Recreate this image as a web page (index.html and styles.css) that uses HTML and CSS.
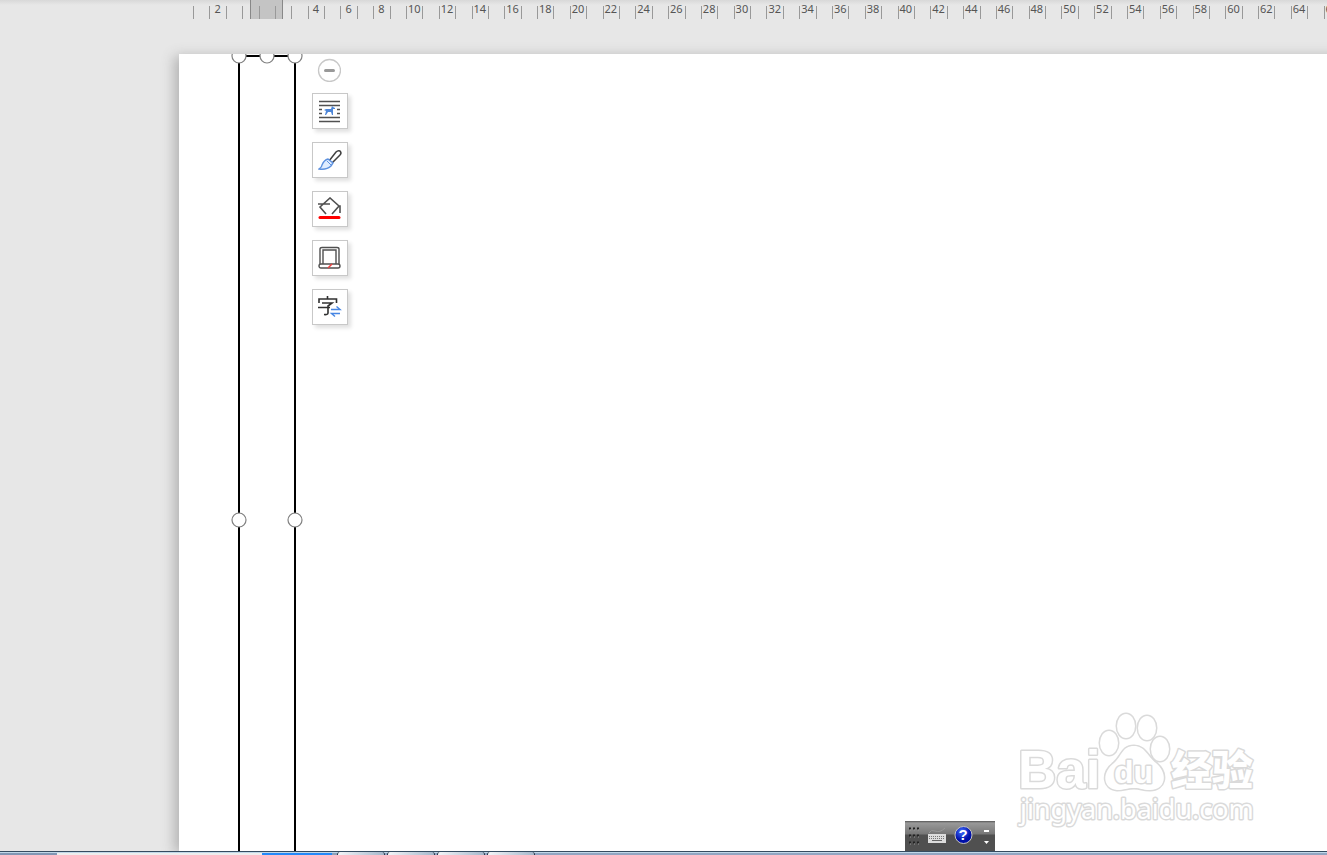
FILE: index.html
```html
<!DOCTYPE html>
<html lang="zh-CN">
<head>
<meta charset="utf-8">
<title>文档</title>
<link rel="stylesheet" href="styles.css">
</head>
<body>
<div class="app">
  <header class="ruler"><div class="margin-range"></div><div class="scale" id="scale"></div></header>
  <main class="workspace">
    <section class="paper">
      <svg class="shape" width="72" height="797" viewBox="0 0 72 797" aria-label="文本框">
        <path d="M8 797V2H64V797" fill="none" stroke="#000" stroke-width="2"/>
        <g fill="#fff" stroke="#808080" stroke-width="1.2">
          <circle cx="8" cy="2" r="7"/><circle cx="36" cy="2" r="7"/><circle cx="64" cy="2" r="7"/>
          <circle cx="8" cy="466" r="7"/><circle cx="64" cy="466" r="7"/>
        </g>
      </svg>
      <nav class="tools">
        <button class="collapse" aria-label="收起"><svg width="24" height="24"><circle cx="12.500" cy="12.500" r="11" fill="#fff" stroke="#c8c8c8" stroke-width="1.3"/><path d="M8.500 12.500H16.500" stroke="#999" stroke-width="3" stroke-linecap="round"/></svg></button>
        <button class="tool" aria-label="布局选项"><svg width="24" height="24"><path d="M1 2.500H22M1 6.500H22M1 10.500H4M19 10.500H22M1 14.500H4M19 14.500H22M1 18.500H22M1 22.500H22" stroke="#505050" stroke-width="1.5"/><path d="M6 11L8 10H13L14 7L15 8L17 9V10H15V16H14L13 13H10L8 16H7L8 12Z" fill="#4d86d8"/></svg></button>
        <button class="tool" aria-label="形状样式"><svg width="24" height="24" fill="none"><path d="M11 13L18 4Q20 2 22 3Q24 5 22 7L14 15Z" stroke="#404040" stroke-width="1.5"/><path d="M10 11L15 15L13 18Q9 22 1 21Q4 19 4 17Q6 12 10 11Z" fill="#e0edff" stroke="#5d91df" stroke-width="1.4"/><path d="M9 13L13 17" stroke="#5d91df"/></svg></button>
        <button class="tool" aria-label="形状填充"><svg width="24" height="24" fill="none"><path d="M8 17L2 10L12 1L21 9L14 17M0 7H12M20 9H22V16" stroke="#505050" stroke-width="1.6"/><path d="M2 20.500H21" stroke="#f00" stroke-width="3" stroke-linecap="round"/></svg></button>
        <button class="tool" aria-label="形状轮廓"><svg width="24" height="24" fill="none" stroke="#505050" stroke-width="1.4"><path d="M2 18V3Q2 1.500 4 1.500H19Q21 1.500 21 3V18M5 18V4H18V18"/><rect x="1" y="18" width="21" height="4" rx="2" fill="#fff"/><path d="M10 22L14 18" stroke="#ed4040" stroke-width="1.6"/></svg></button>
        <button class="tool" aria-label="文字方向"><svg width="24" height="24" fill="none" stroke="#303030" stroke-width="1.6"><path d="M9.500 1V4M1 8V4H18.500V8M4 8H14L10 11V18Q10 20 6 19.500M0 12.500H12"/><path d="M13 14.500H22L18.500 11.500M22 18.500H13.500L17 21.500" stroke="#4685e3" stroke-width="1.4"/></svg></button>
      </nav>
    </section>
    <svg class="watermark" width="250" height="120" viewBox="0 0 250 120" aria-label="Baidu经验">
      <g class="outline">
        <text class="latin" x="2" y="76">Bai</text>
        <ellipse cx="93" cy="31" rx="9" ry="12"/><ellipse cx="110" cy="14" rx="9" ry="12"/><ellipse cx="131" cy="16" rx="9" ry="12"/><ellipse cx="144" cy="37" rx="9" ry="12"/>
        <path d="M118 34C129 34 131 44 140 51C153 62 149 78 134 78C125 78 126 76 118 76C110 76 109 78 101 78C87 77 85 61 98 51C106 44 106 34 118 34Z"/>
        <text class="inner" x="98" y="71">du</text>
        <text class="cjk" x="155" y="73">经验</text>
        <text class="url" x="4" y="107">jingyan.baidu.com</text>
      </g>
    </svg>
    <aside class="language-bar">
      <svg width="90" height="30" viewBox="0 0 90 30">
        <defs><radialGradient id="help" cx="40%" cy="30%"><stop offset="0" stop-color="#4470ff"/><stop offset="1" stop-color="#0010a8"/></radialGradient></defs>
        <path d="M4 7.500H15M4 14.500H15M4 21.500H15" stroke="#222" stroke-width="2" stroke-dasharray="2 2"/>
        <path d="M5 9H16M5 16H16M5 23H16" stroke="#999" stroke-dasharray="1 3"/>
        <path d="M24 12Q26 8 30 10Q35 12 40 7" fill="none" stroke="#999"/>
        <rect x="23" y="13" width="18" height="9" fill="#ddd"/><path d="M24 15.500H40M24 17.500H40" stroke="#777" stroke-dasharray="1 1"/><path d="M27 19.500H37" stroke="#666"/>
        <circle cx="58.500" cy="14" r="8.500" fill="url(#help)" stroke="#c4c4c4"/><text class="question" x="58" y="19">?</text>
        <path d="M79 10H84" stroke="#fff" stroke-width="2"/><path d="M79 20H84L81.500 23Z" fill="#fff"/>
      </svg>
    </aside>
  </main>
  <footer class="taskbar"><span class="start"></span><span class="light"></span><span class="active"></span><span class="gap"></span><span class="window"></span><span class="window"></span><span class="window"></span><span class="window"></span></footer>
</div>
<script src="ruler.js"></script>
</body>
</html>
```
FILE: styles.css
```css
* { box-sizing: border-box; }
body { margin: 0; background: #e7e7e7; }
.app { display: flex; flex-direction: column; height: 100vh; overflow: hidden; }
.ruler { position: relative; flex: 0 0 54px; padding-left: 193px; overflow: hidden; background: linear-gradient(#d8d8d8, #e7e7e7 5px); }
.margin-range { position: absolute; left: 250px; top: 0; width: 33px; height: 19px; background: #c4c4c4; border: solid #888; border-width: 0 1px; }
.scale { position: relative; display: grid; grid-template-columns: repeat(70, 1fr); width: 1147px; height: 19px; font: 11px/18px "Noto Sans", sans-serif; color: #555; }
.scale span { display: flex; justify-content: center; background: linear-gradient(#999, #999) left bottom / 1px 13px no-repeat; }
.workspace { position: relative; display: flex; flex: 1; min-height: 0; padding-left: 179px; }
.paper { display: flex; align-items: flex-start; flex: 1; margin-right: -24px; background: #fff; box-shadow: -5px 2px 12px #b4b4b4; padding-left: 52px; }
.shape { display: block; flex: none; }
.tools { display: flex; flex-direction: column; align-items: flex-start; gap: 13px; padding: 4px 0 0 9px; }
.collapse { display: block; width: 24px; height: 24px; padding: 0; border: 0; background: none; margin: 0 5px -2px; }
.tool { display: grid; place-items: center; width: 36px; height: 36px; padding: 0; background: #fff; border: 1px solid #c8c8c8; box-shadow: 3px 3px 4px #e0e0e0; }
.watermark { position: absolute; right: 61px; bottom: 19px; }
.outline { fill: #fff; stroke: #dadada; stroke-width: 3px; stroke-linejoin: round; paint-order: stroke; }
.latin { font: bold 53px "Liberation Sans", sans-serif; }
.inner { font: bold 32px "Liberation Sans", sans-serif; }
.cjk { font: 900 41px "Noto Sans CJK SC", sans-serif; }
.url { font: 27px "Noto Sans", sans-serif; }
.language-bar { position: absolute; right: 332px; bottom: 0; height: 30px; background: linear-gradient(#555 0, #999 2px, #777 13px, #505050 14px, #505050); }
.language-bar svg { display: block; }
.question { font: bold 15px "Liberation Sans", sans-serif; fill: #fff; text-anchor: middle; }
.taskbar { position: relative; display: flex; flex: 0 0 4px; padding-top: 1px; border-top: 1px solid #354b60; background: linear-gradient(#c0d8e8 1px, #91a5c2 1px); }
.start { width: 57px; background: #8096b4; }
.light { width: 205px; background: #ededed; }
.active { width: 70px; background: #2389fa; }
.gap { width: 5px; background: #8da2b9; }
.window { width: 48px; height: 3px; margin: -1px 2px 0 0; border: solid #273442; border-width: 0 1px; border-radius: 3px 3px 0 0; background: linear-gradient(100deg, #f3f5f8, #a5b8cc); }
```
FILE: ruler.js
```javascript
const scale = document.getElementById("scale");
for (let i = 0; i < 70; i++) {
  const cell = document.createElement("span");
  if (i === 1) cell.textContent = "2";
  if (i >= 7 && i % 2 === 1) cell.textContent = String(i - 3);
  scale.append(cell);
}
```
